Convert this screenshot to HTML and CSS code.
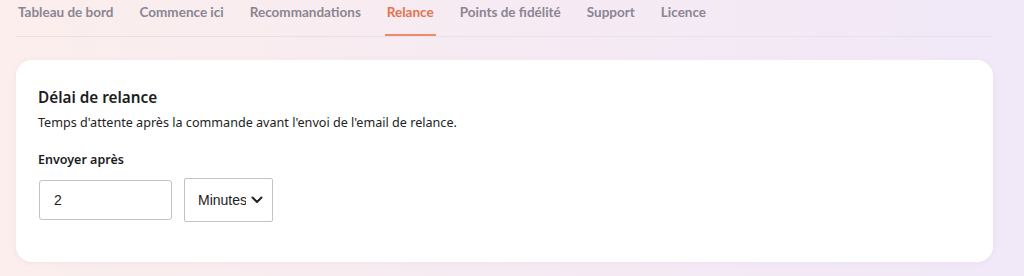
FILE: index.html
```html
<!DOCTYPE html>
<html lang="fr">
<head>
<meta charset="utf-8">
<title>Relance</title>
<link rel="stylesheet" href="styles.css">
</head>
<body>
<div class="page">
  <nav class="tabs">
    <a class="tab">Tableau de bord</a>
    <a class="tab">Commence ici</a>
    <a class="tab">Recommandations</a>
    <a class="tab active">Relance</a>
    <a class="tab">Points de fidélité</a>
    <a class="tab">Support</a>
    <a class="tab">Licence</a>
  </nav>
  <section class="card">
    <h2 class="card-title">Délai de relance</h2>
    <p class="card-desc">Temps d'attente après la commande avant l'envoi de l'email de relance.</p>
    <label class="field-label">Envoyer après</label>
    <div class="field-row">
      <input class="num-input" type="text" value="2">
      <div class="select-wrap">
        <select class="unit-select">
          <option>Minutes</option>
          <option>Heures</option>
          <option>Jours</option>
        </select>
        <svg class="chevron" width="12" height="8" viewBox="0 0 12 8"><path d="M1.5 1.5 L6 6 L10.5 1.5" fill="none" stroke="#222" stroke-width="2" stroke-linecap="round" stroke-linejoin="round"/></svg>
      </div>
    </div>
  </section>
</div>
</body>
</html>
```
FILE: styles.css
```css
html, body {
  margin: 0;
  height: 100%;
}
body {
  background: linear-gradient(90deg, #fbeeec 0%, #f6ebf3 50%, #f1e8f8 100%);
  font-family: "Noto Sans", "DejaVu Sans", sans-serif;
  color: #1d1d1f;
}
.page {
  padding: 0 31px 0 16px;
}
.tabs {
  display: flex;
  gap: 22px;
  border-bottom: 1px solid #e7e1ee;
  height: 36px;
}
.tab {
  display: block;
  padding: 3px 2px 0;
  height: 31px;
  font-family: "Lato", "Noto Sans", sans-serif;
  font-weight: 700;
  font-size: 13.5px;
  line-height: 18px;
  color: #8b8593;
  border-bottom: 2px solid transparent;
  cursor: pointer;
}
.tab.active {
  color: #e4714f;
  border-bottom-color: #f2896b;
}
.card {
  margin-top: 23px;
  background: #fff;
  border-radius: 16px;
  box-shadow: 0 1px 6px rgba(120, 90, 140, 0.06);
  padding: 25px 22px 40px;
}
.card-title {
  margin: 0;
  font-size: 15.3px;
  line-height: 24px;
  font-weight: 600;
  color: #1c1c1e;
}
.card-desc {
  margin: 4px 0 0;
  font-size: 12.6px;
  line-height: 20px;
  color: #222;
}
.field-label {
  display: block;
  margin-top: 17px;
  font-size: 12.5px;
  line-height: 20px;
  font-weight: 600;
  color: #1c1c1e;
}
.field-row {
  display: flex;
  align-items: center;
  gap: 12px;
  margin-top: 8px;
}
.num-input {
  box-sizing: border-box;
  width: 133px;
  height: 40px;
  margin-left: 1px;
  padding: 0 14px;
  border: 1px solid #c3c3c3;
  border-radius: 3px;
  font-family: "Liberation Sans", Arial, sans-serif;
  font-size: 14px;
  color: #222;
  background: #fff;
  outline: none;
}
.select-wrap {
  position: relative;
}
.unit-select {
  box-sizing: border-box;
  -webkit-appearance: none;
  appearance: none;
  width: 89px;
  height: 44px;
  padding: 0 26px 0 13px;
  border: 1px solid #c3c3c3;
  border-radius: 2px;
  font-family: "Liberation Sans", Arial, sans-serif;
  font-size: 14px;
  color: #222;
  background: #fff;
  outline: none;
}
.chevron {
  position: absolute;
  right: 10px;
  top: 18px;
  pointer-events: none;
}
```
